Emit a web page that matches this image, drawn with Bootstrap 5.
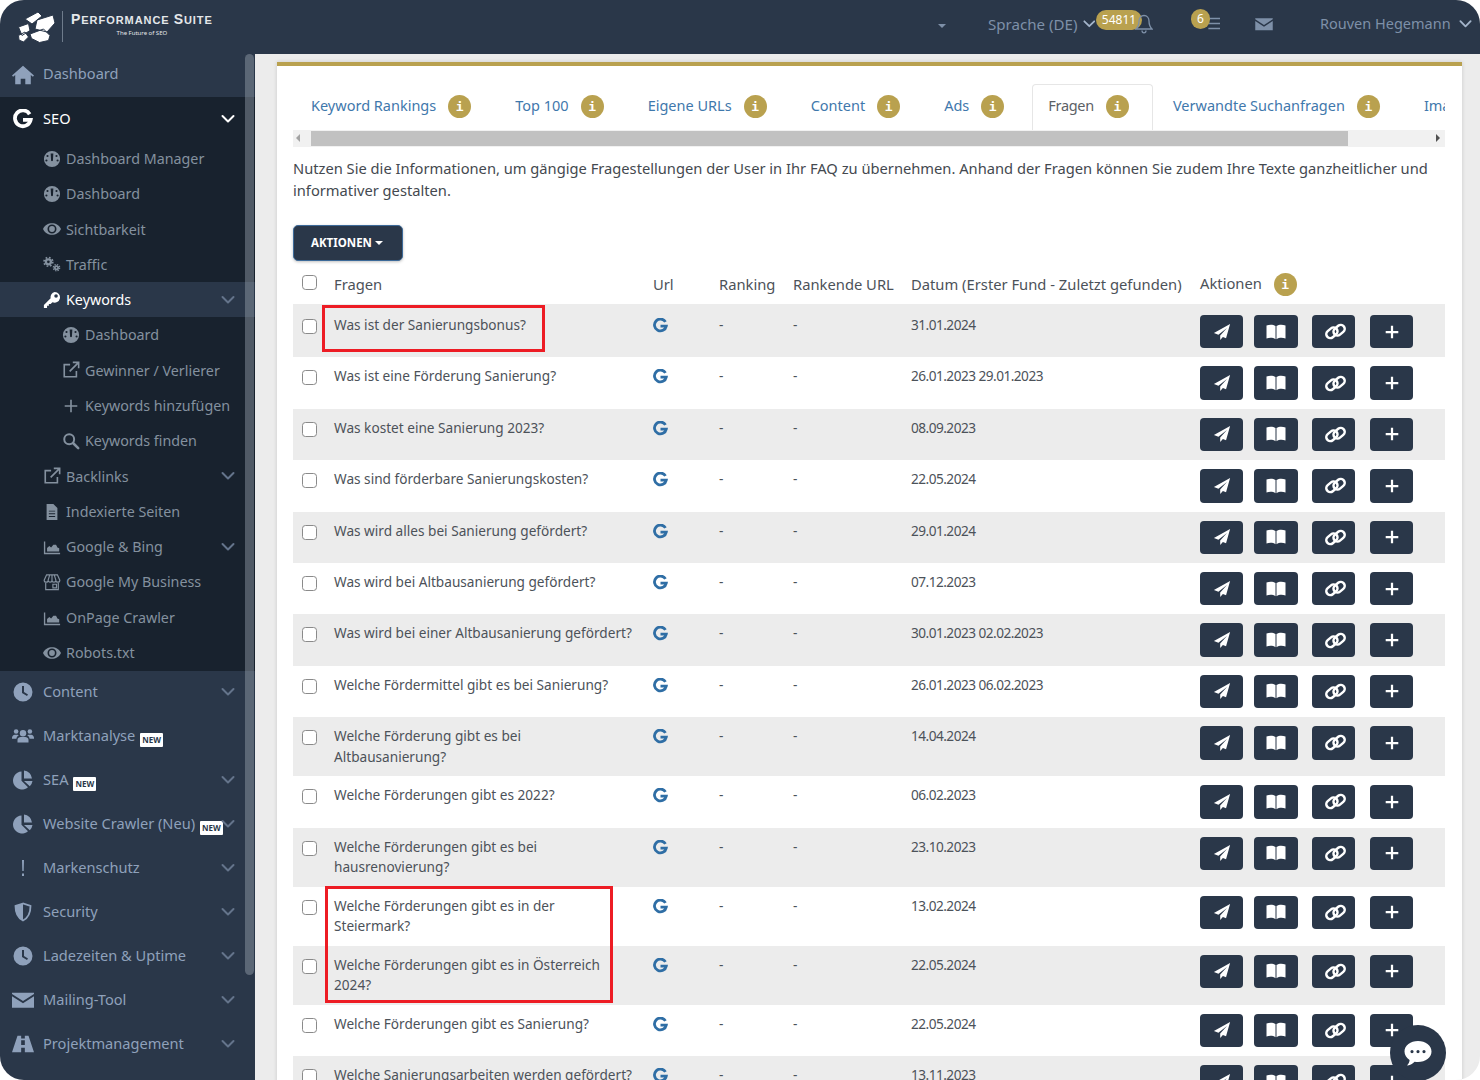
<!DOCTYPE html>
<html lang="de">
<head>
<meta charset="UTF-8">
<title>Performance Suite - Fragen</title>
<link href="https://cdn.jsdelivr.net/npm/bootstrap@5.3.3/dist/css/bootstrap.min.css" rel="stylesheet">
<style>
html, body { height: 1080px; overflow: hidden; background: #fff; }
body { font-family: "Noto Sans", "Liberation Sans", sans-serif; font-size: 14px; color: #4c5259; }
.app-shell { position: relative; height: 1080px; border-radius: 24px; overflow: hidden; background: #ececec; }
.top-bar { height: 54px; background: #2a3749; color: #7e90a8; padding-bottom: 6px; }
.brand-box { width: 255px; padding-left: 17px; flex: none; }
.brand-mark { width: 42px; height: 32px; color: #fff; margin-top: 6px; }
.brand-line { width: 1px; height: 31px; background: #6e7b8b; margin: 5px 8px 0 3px; }
.brand-name { color: #e4e7ea; font-family: "Liberation Sans", sans-serif; font-weight: 700; font-size: 11px; font-variant: small-caps; letter-spacing: .95px; line-height: 13px; padding-top: 1px; }
.brand-name b { font-size: 14px; }
.brand-sub { color: #e4e7ea; font-size: 6px; line-height: 8px; text-align: center; padding-top: 2px; }
.top-item { position: relative; font-size: 15.1px; white-space: nowrap; }
.top-caret { width: 0; height: 0; border: 4px solid transparent; border-top-color: #7e90a8; border-bottom: 0; margin-left: 683px; margin-top: 3px; }
.top-lang { margin-left: 42px; width: 108px; gap: 6px; }
.top-chev { color: #a3b4ca; }
.top-bell { width: 56px; height: 20px; }
.top-list { margin-left: 39px; width: 28px; height: 20px; }
.top-mail { margin-left: 36px; width: 18px; }
.top-user { margin-left: 47px; font-size: 14.5px; }
.gold-pill { position: absolute; background: #b9a14f; color: #fff; border-radius: 10px; font-size: 12px; line-height: 20px; height: 20px; text-align: center; }
.pill-count { width: 46px; left: 0; top: -4px; }
.pill-six { width: 19px; left: 0; top: -5px; }
.bell-ico { left: 39px; top: 0; }
.list-ico { left: 14px; top: 2px; }
.side-panel { position: relative; width: 255px; height: 1026px; background: #2a3749; overflow: hidden; flex: none; }
.side-thumb { position: absolute; left: 245px; top: 0; width: 9px; height: 921px; border-radius: 5px; background: rgba(160,170,180,.42); }
.side-row { height: 44px; display: flex; align-items: center; color: #8fa1bb; font-size: 14.6px; white-space: nowrap; position: relative; }
.side-row .side-ico { width: 22px; height: 20px; position: absolute; left: 12px; top: 50%; margin-top: -10px; }
.side-row .side-txt { position: absolute; left: 43px; }
.side-row .side-chev { position: absolute; left: 221px; top: 50%; margin-top: -5px; width: 14px; height: 10px; color: #64748b; }
.row-dash { height: 43px; padding-bottom: 2px; }
.row-dash .side-ico { margin-top: -11px; }
.row-dash .side-txt { top: 9px; }
.side-open { background: #18222e; height: 574px; margin-bottom: -1px; }
.row-seo { height: 43px; color: #fff; }
.row-seo.side-row .side-chev { color: #fff; }
.side-sub { padding-top: 1px; }
.side-sub .side-row { height: 35.3px; color: #84919f; font-size: 14.3px; }
.side-sub .side-ico { width: 18px; height: 18px; left: 43px; margin-top: -9px; }
.side-sub .side-txt { left: 66px; }
.side-sub .row-active { background: #2a3749; color: #fff; }
.side-sub .row-deep .side-ico { left: 62px; }
.side-sub .row-deep .side-txt { left: 85px; }
.new-tag { display: inline-block; background: #fff; color: #2a3749; font-size: 8px; font-weight: 700; line-height: 14px; padding: 0 2px; margin-left: 5px; vertical-align: -2px; border-radius: 1px; }
.main-area { flex: 1; padding: 8px 18px 0 22px; overflow: hidden; }
.content-box { background: #fff; border-top: 4px solid #b9a14f; padding: 18px 17px 0 16px; height: 1100px; box-shadow: 0 0 4px rgba(0,0,0,.15); }
.tab-strip { height: 46px; overflow: hidden; border: 0; flex-wrap: nowrap; padding-left: 2px; }
.tab-strip .nav-link { display: flex; align-items: center; gap: 12px; white-space: nowrap; color: #3f78ac; padding: 0 23px 3px 15px; height: 46px; margin-right: 4px; border-radius: 4px 4px 0 0; border: 1px solid transparent; border-bottom: 0; font-size: 14.5px; }
.tab-strip .nav-link.active { color: #5c6166; border-color: #e6e6e6; background: #fff; letter-spacing: -.3px; }
.info-dot { flex: none; display: inline-block; width: 23px; height: 23px; border-radius: 50%; background: #b9a14f; color: #fff; text-align: center; font-family: "DejaVu Sans Mono", monospace; font-weight: 700; font-size: 13px; line-height: 23px; letter-spacing: 0; }
.fake-scroll { height: 17px; background: #f1f1f1; display: flex; align-items: center; position: relative; }
.scroll-fill { position: absolute; left: 18px; top: 1px; bottom: 1px; width: 1037px; background: #c1c1c1; }
.arr-left, .arr-right { position: absolute; width: 0; height: 0; border: 4px solid transparent; top: 4px; }
.arr-left { left: 3px; border-right-color: #a3a3a3; border-left: 0; }
.arr-right { right: 5px; border-left-color: #505050; border-right: 0; }
.intro-text { font-size: 14.7px; line-height: 21.5px; margin: 11px 0 24px; color: #44494f; }
.btn-actions { background: #2a3749; color: #fff; font-size: 11.5px; font-weight: 700; padding: 0 19px 0 17px; height: 36px; line-height: 34px; border-radius: 5px; border: 1px solid #3d6a99; box-shadow: 0 1px 3px rgba(0,0,0,.25); }
.btn-actions:hover { background: #2a3749; color: #fff; }
.btn-caret { display: inline-block; width: 0; height: 0; border: 4px solid transparent; border-top-color: #fff; border-bottom: 0; vertical-align: 2px; }
.table-holder { position: relative; margin-top: 4px; }
.q-table { width: 1152px; table-layout: fixed; border-collapse: collapse; font-size: 13.63px; }
.q-table th { font-weight: 400; font-size: 14.75px; padding: 0 8px; height: 39px; color: #4c5259; white-space: nowrap; line-height: 21px; vertical-align: middle; }
.q-table td { padding: 9px 8px; line-height: 20.5px; vertical-align: top; }
.q-table tbody tr:first-child td { padding-top: 11px; }
.q-table td.date-cell { letter-spacing: -.52px; }
.g-mark { width: 15px; height: 15px; color: #2f6ea5; display: block; margin-top: 3px; }
.q-table tbody tr:nth-child(odd) td { background: #ececec; }
.q-check { width: 15px; height: 15px; margin: 4px 0 0 1px; border: 1px solid #8a8a8a; border-radius: 3px; }
.q-table th .q-check { margin-top: -5px; }
.act-wrap { display: flex; height: 33.4px; }
.act-btn { height: 33.4px; width: 43px; background: #2a3749; color: #fff; border-radius: 4px; display: flex; align-items: center; justify-content: center; margin-right: 11px; }
.act-btn:nth-child(2) { width: 44px; margin-right: 14px; }
.act-btn:nth-child(3) { margin-right: 15px; }
.act-btn svg { width: 18px; height: 18px; }
.act-btn .ico-book { width: 20px; height: 20px; }
.act-btn .ico-link { width: 21px; height: 21px; margin-left: 3px; }
.red-frame { position: absolute; border: 3px solid #ed1c24; pointer-events: none; }
.frame-one { left: 29px; top: 40px; width: 223px; height: 47px; }
.frame-two { left: 32px; top: 621px; width: 288px; height: 117px; }
.chat-bubble { position: absolute; left: 1390px; top: 1025px; width: 56px; height: 56px; border-radius: 50%; background: #2a3749; color: #fff; display: flex; align-items: center; justify-content: center; }
.chat-bubble svg { width: 28px; height: 26px; }
</style>
</head>
<body>
<svg width="0" height="0" class="d-block" aria-hidden="true">
  <symbol id="i-home" viewBox="0 0 24 20"><path fill="currentColor" d="M12 0 0 10.500l1.200 1.400L3.500 10v10h6v-6h5v6h6V10l2.300 1.900L24 10.500z"/></symbol>
  <symbol id="i-g" viewBox="0 0 24 24"><path fill="none" stroke="currentColor" stroke-width="4.500" d="M20 6.200A9.500 9.500 0 1 0 21.200 13H12"/></symbol>
  <symbol id="i-chev" viewBox="0 0 14 10"><path fill="none" stroke="currentColor" stroke-width="2" stroke-linecap="round" stroke-linejoin="round" d="M1.500 2 7 7.500 12.500 2"/></symbol>
  <symbol id="i-gauge" viewBox="0 0 20 20"><path fill="currentColor" fill-rule="evenodd" d="M10 1a9 9 0 1 1 0 18 9 9 0 0 1 0-18zM9 12a1.500 1.500 0 0 0 2 0l.5-8h-3zM5 5.500a1.200 1.200 0 1 0 0 2.400 1.200 1.200 0 0 0 0-2.400zM15 5.500a1.200 1.200 0 1 0 0 2.400 1.200 1.200 0 0 0 0-2.400zM3.800 10.500a1.200 1.200 0 1 0 0 2.400 1.200 1.200 0 0 0 0-2.400zM16.200 10.500a1.200 1.200 0 1 0 0 2.400 1.200 1.200 0 0 0 0-2.400z"/></symbol>
  <symbol id="i-eye" viewBox="0 0 20 20"><path fill="currentColor" fill-rule="evenodd" d="M0 10c3.500-8.500 16.500-8.500 20 0-3.500 8.500-16.500 8.500-20 0zm10-5a5 5 0 1 0 0 10 5 5 0 0 0 0-10zm0 1.800a3.200 3.200 0 1 1 0 6.400 3.200 3.200 0 0 1 0-6.400z"/></symbol>
  <symbol id="i-cogs" viewBox="0 0 20 20"><g fill="none" stroke="currentColor"><circle cx="6" cy="6.500" r="2.800" stroke-width="2.600"/><circle cx="6" cy="6.500" r="4.900" stroke-width="1.800" stroke-dasharray="1.900 1.950"/><circle cx="15" cy="13" r="1.800" stroke-width="2"/><circle cx="15" cy="13" r="3.500" stroke-width="1.500" stroke-dasharray="1.500 1.250"/></g></symbol>
  <symbol id="i-key" viewBox="0 0 20 20"><path fill="currentColor" fill-rule="evenodd" d="M13 1a6 6 0 1 1-2.500 11.500L8.500 14.500H6.500v2h-2v2.500H1v-3.500l7.500-7.500A6 6 0 0 1 13 1zm1.500 2.500a2 2 0 1 0 0 4 2 2 0 0 0 0-4z"/></symbol>
  <symbol id="i-ext" viewBox="0 0 20 20"><path fill="none" stroke="currentColor" stroke-width="1.800" d="M9 4H2.500v13.500H16V11M12 1.500h6.500V8M18.500 1.500 8.500 11.500"/></symbol>
  <symbol id="i-plus" viewBox="0 0 20 20"><path fill="none" stroke="currentColor" stroke-width="1.800" d="M10 3v14M3 10h14"/></symbol>
  <symbol id="i-plusb" viewBox="0 0 20 20"><path fill="none" stroke="currentColor" stroke-width="2.500" d="M10 3v14M3 10h14"/></symbol>
  <symbol id="i-search" viewBox="0 0 20 20"><circle cx="8" cy="8" r="5.500" fill="none" stroke="currentColor" stroke-width="2.200"/><path stroke="currentColor" stroke-width="2.800" stroke-linecap="round" d="m12.500 12.500 5.500 5.500"/></symbol>
  <symbol id="i-file" viewBox="0 0 20 20"><path fill="currentColor" fill-rule="evenodd" d="M4 1h7.500L16 5.500V19H4zM6.500 8.500v1h7v-1zm0 3v1h7v-1zm0 3v1h7v-1z"/></symbol>
  <symbol id="i-area" viewBox="0 0 20 20"><path fill="currentColor" d="M1 4h1.500v12.500H19V18H1zM4.500 15v-4l2.500-2 2 1.500 2.500-3h3l1.500 3 2 1V15z"/></symbol>
  <symbol id="i-store" viewBox="0 0 20 20"><path fill="none" stroke="currentColor" stroke-width="1.300" d="M4 2h12l2.700 6a2.200 2.200 0 0 1-4.400 0 2.150 2.150 0 0 1-4.300 0 2.150 2.150 0 0 1-4.300 0 2.200 2.200 0 0 1-4.400 0zM7.500 2 5.700 8M12.500 2l1.800 6M10 2v6M3 11v7.500h14V11M11 12.500h4v4h-4z"/></symbol>
  <symbol id="i-clock" viewBox="0 0 20 20"><path fill="currentColor" fill-rule="evenodd" d="M10 .5a9.500 9.500 0 1 1 0 19 9.500 9.500 0 0 1 0-19zM9 4v7l5 3 1-1.500-4-2.500V4z"/></symbol>
  <symbol id="i-users" viewBox="0 0 24 20"><g fill="currentColor"><circle cx="12" cy="7" r="3.500"/><circle cx="4.500" cy="5" r="2.500"/><circle cx="19.500" cy="5" r="2.500"/><path d="M6 17v-3c0-2 2-3 3.500-3h5c1.500 0 3.500 1 3.500 3v3zM0 12c0-2 1.500-3.500 3-3.500h3c.5 0 1 .3 1.400.600C5.800 10 5 11.500 4.800 13H0zM24 12c0-2-1.500-3.500-3-3.500h-3c-.5 0-1 .3-1.400.600 1.600.9 2.400 2.400 2.600 3.900H24z"/></g></symbol>
  <symbol id="i-pie" viewBox="0 0 20 20"><path fill="currentColor" d="M8.500 1.500v9.200l6.500 6.500A9 9 0 1 1 8.500 1.500zM11 .5a9 9 0 0 1 8 8h-8zM11 11h8.500a9 9 0 0 1-2.700 5.200z"/></symbol>
  <symbol id="i-excl" viewBox="0 0 20 20"><path fill="currentColor" d="M9 2h2l-.3 11H9.300zM9 15.500h2v2.500H9z"/></symbol>
  <symbol id="i-shield" viewBox="0 0 20 20"><path fill="none" stroke="currentColor" stroke-width="1.800" d="M10 1.500 2.500 4c0 7 1.500 11.500 7.500 14.500C16 15.500 17.500 11 17.500 4z"/><path fill="currentColor" d="M10 1.500 2.500 4c0 7 1.500 11.500 7.500 14.500z"/></symbol>
  <symbol id="i-mail" viewBox="0 0 20 16"><path fill="currentColor" d="M0 1.500h20v1L10 9 0 2.500zM0 4.500 10 11l10-6.500V15H0z"/></symbol>
  <symbol id="i-road" viewBox="0 0 24 20"><path fill="currentColor" fill-rule="evenodd" d="M6 1h4v3h4V1h4l6 18H14v-5h-4v5H0zM10 6v5h4V6z"/></symbol>
  <symbol id="i-plane" viewBox="0 0 20 20"><path fill="currentColor" d="M19 1 1 11l5 2L15.500 5.500 8 14v5l3-3.500 3.500 1.500z"/></symbol>
  <symbol id="i-book" viewBox="0 0 20 20"><path fill="currentColor" d="M.500 3.500C3.500 2.300 7 2.300 9.500 4v13.200C7 15.500 3.500 15.500.5 16.500zM19.500 3.500C16.500 2.300 13 2.300 10.500 4v13.200c2.500-1.700 6-1.700 9-.7z"/></symbol>
  <symbol id="i-link" viewBox="0 0 20 20"><g fill="none" stroke="currentColor" stroke-width="2.400"><rect x=".8" y="7.500" width="11.500" height="7.500" rx="3.700" transform="rotate(-40 6.500 11.200)"/><rect x="7.700" y="5" width="11.500" height="7.500" rx="3.700" transform="rotate(-40 13.500 8.800)"/></g></symbol>
  <symbol id="i-bell" viewBox="0 0 18 20"><path fill="none" stroke="currentColor" stroke-width="1.300" d="M9 1.500c3 0 5 2.500 5 5.500 0 4 1 6 3 8H1c2-2 3-4 3-8 0-3 2-5.500 5-5.500zM7 16.500c0 1.300 1 2.300 2 2.300s2-1 2-2.300"/></symbol>
  <symbol id="i-list" viewBox="0 0 18 16"><path fill="currentColor" d="M4 1h14v2H4zM4 7h14v2H4zM4 13h14v2H4z"/></symbol>
  <symbol id="i-chat" viewBox="0 0 28 26"><path fill="currentColor" fill-rule="evenodd" d="M14 1c7.500 0 13.500 4.600 13.500 10.500S21.500 22 14 22c-1.200 0-2.300-.1-3.400-.3C8.500 24 5.500 25.300 3 25.500c1.500-1.500 2.500-3.600 2.600-5.500C2.500 18 .5 15 .5 11.500.5 5.600 6.500 1 14 1zM8 10a1.600 1.600 0 1 0 0 3.200A1.600 1.600 0 0 0 8 10zm6 0a1.600 1.600 0 1 0 0 3.200 1.600 1.600 0 0 0 0-3.200zm6 0a1.600 1.600 0 1 0 0 3.200 1.600 1.600 0 0 0 0-3.200z"/></symbol>
  <symbol id="i-logo" viewBox="17 9 42 32"><g fill="currentColor" stroke="#2a3749" stroke-width="1"><path d="M25 17l13-7 4 4-10 8zM37 18l16-5 2 8-8 9-12-3zM18.500 25l10-3.500 1.500 7-8 5zM18.500 33.500l6.500-3.500 3.500 5-5 5-4.500-2zM30 32l13.500-5 6.500 6.500-1.500 5-9 2-8-4z"/></g></symbol>
</svg>

<div class="app-shell">
  <header class="top-bar d-flex align-items-center">
    <div class="brand-box d-flex align-items-center">
      <svg class="brand-mark"><use href="#i-logo"/></svg>
      <span class="brand-line"></span>
      <div>
        <div class="brand-name"><b>P</b>ERFORMANCE <b>S</b>UITE</div>
        <div class="brand-sub">The Future of SEO</div>
      </div>
    </div>
    <span class="top-caret"></span>
    <span class="top-item top-lang d-flex align-items-center">Sprache (DE) <svg class="top-chev" width="13" height="10"><use href="#i-chev"/></svg></span>
    <span class="top-item top-bell"><span class="gold-pill pill-count">54811</span><svg class="position-absolute bell-ico" width="18" height="20"><use href="#i-bell"/></svg></span>
    <span class="top-item top-list"><svg class="position-absolute list-ico" width="15" height="15"><use href="#i-list"/></svg><span class="gold-pill pill-six">6</span></span>
    <svg class="top-mail" height="14"><use href="#i-mail"/></svg>
    <span class="top-item top-user d-flex align-items-center gap-2">Rouven Hegemann <svg class="top-chev" width="13" height="10"><use href="#i-chev"/></svg></span>
  </header>

  <div class="d-flex">
    <aside class="side-panel" id="sidebar"></aside>
    <main class="main-area">
      <div class="content-box">
        <ul class="nav nav-tabs tab-strip" id="tabs"></ul>
        <div class="fake-scroll"><span class="arr-left"></span><span class="scroll-fill"></span><span class="arr-right"></span></div>
        <p class="intro-text">Nutzen Sie die Informationen, um gängige Fragestellungen der User in Ihr FAQ zu übernehmen. Anhand der Fragen können Sie zudem Ihre Texte ganzheitlicher und informativer gestalten.</p>
        <button type="button" class="btn btn-actions">AKTIONEN <span class="btn-caret"></span></button>
        <div class="table-holder">
          <table class="q-table">
            <colgroup><col style="width:33px"><col style="width:319px"><col style="width:66px"><col style="width:74px"><col style="width:118px"><col style="width:289px"><col style="width:253px"></colgroup>
            <thead>
              <tr>
                <th><input type="checkbox" class="q-check form-check-input d-block"></th>
                <th>Fragen</th><th>Url</th><th>Ranking</th><th>Rankende URL</th>
                <th>Datum (Erster Fund - Zuletzt gefunden)</th>
                <th>Aktionen <span class="info-dot ms-2">i</span></th>
              </tr>
            </thead>
            <tbody id="rows"></tbody>
          </table>
          <span class="red-frame frame-one"></span>
          <span class="red-frame frame-two"></span>
        </div>
      </div>
    </main>
  </div>
  <div class="chat-bubble"><svg><use href="#i-chat"/></svg></div>
</div>

<script>
const ico = (n, c) => `<svg class="${c || 'side-ico'}"><use href="#i-${n}"/></svg>`;
const chev = ico('chev', 'side-chev');
const tag = '<span class="new-tag">NEW</span>';
const row = (icon, text, opts = {}) => `<div class="side-row ${opts.cls || ''}">${ico(icon)}<span class="side-txt">${text}</span>${opts.chev ? chev : ''}</div>`;

document.getElementById('sidebar').innerHTML = `
  ${row('home', 'Dashboard', {cls: 'row-dash'})}
  <div class="side-open">
    ${row('g', 'SEO', {cls: 'row-seo', chev: 1})}
    <div class="side-sub">
      ${row('gauge', 'Dashboard Manager')}
      ${row('gauge', 'Dashboard')}
      ${row('eye', 'Sichtbarkeit')}
      ${row('cogs', 'Traffic')}
      ${row('key', 'Keywords', {cls: 'row-active', chev: 1})}
      ${row('gauge', 'Dashboard', {cls: 'row-deep'})}
      ${row('ext', 'Gewinner / Verlierer', {cls: 'row-deep'})}
      ${row('plus', 'Keywords hinzufügen', {cls: 'row-deep'})}
      ${row('search', 'Keywords finden', {cls: 'row-deep'})}
      ${row('ext', 'Backlinks', {chev: 1})}
      ${row('file', 'Indexierte Seiten')}
      ${row('area', 'Google &amp; Bing', {chev: 1})}
      ${row('store', 'Google My Business')}
      ${row('area', 'OnPage Crawler')}
      ${row('eye', 'Robots.txt')}
    </div>
  </div>
  ${row('clock', 'Content', {chev: 1})}
  ${row('users', 'Marktanalyse' + tag)}
  ${row('pie', 'SEA' + tag, {chev: 1})}
  ${row('pie', 'Website Crawler (Neu)' + tag, {chev: 1})}
  ${row('excl', 'Markenschutz', {chev: 1})}
  ${row('shield', 'Security', {chev: 1})}
  ${row('clock', 'Ladezeiten &amp; Uptime', {chev: 1})}
  ${row('mail', 'Mailing-Tool', {chev: 1})}
  ${row('road', 'Projektmanagement', {chev: 1})}
  <div class="side-thumb"></div>`;

const tabs = ['Keyword Rankings', 'Top 100', 'Eigene URLs', 'Content', 'Ads', 'Fragen', 'Verwandte Suchanfragen', 'Images'];
document.getElementById('tabs').innerHTML = tabs.map(t =>
  `<li class="nav-item"><a class="nav-link ${t === 'Fragen' ? 'active' : ''}" href="#">${t} <span class="info-dot">i</span></a></li>`).join('');

const data = [
  ['Was ist der Sanierungsbonus?', '31.01.2024'],
  ['Was ist eine Förderung Sanierung?', '26.01.2023 29.01.2023'],
  ['Was kostet eine Sanierung 2023?', '08.09.2023'],
  ['Was sind förderbare Sanierungskosten?', '22.05.2024'],
  ['Was wird alles bei Sanierung gefördert?', '29.01.2024'],
  ['Was wird bei Altbausanierung gefördert?', '07.12.2023'],
  ['Was wird bei einer Altbausanierung gefördert?', '30.01.2023 02.02.2023'],
  ['Welche Fördermittel gibt es bei Sanierung?', '26.01.2023 06.02.2023'],
  ['Welche Förderung gibt es bei<br>Altbausanierung?', '14.04.2024'],
  ['Welche Förderungen gibt es 2022?', '06.02.2023'],
  ['Welche Förderungen gibt es bei<br>hausrenovierung?', '23.10.2023'],
  ['Welche Förderungen gibt es in der<br>Steiermark?', '13.02.2024'],
  ['Welche Förderungen gibt es in Österreich<br>2024?', '22.05.2024'],
  ['Welche Förderungen gibt es Sanierung?', '22.05.2024'],
  ['Welche Sanierungsarbeiten werden gefördert?', '13.11.2023']
];
document.getElementById('rows').innerHTML = data.map(d => `
  <tr>
    <td><input type="checkbox" class="q-check form-check-input d-block"></td>
    <td>${d[0]}</td>
    <td><svg class="g-mark"><use href="#i-g"/></svg></td>
    <td>-</td><td>-</td>
    <td class="date-cell">${d[1]}</td>
    <td><div class="act-wrap">
      <a class="act-btn" href="#"><svg><use href="#i-plane"/></svg></a>
      <a class="act-btn" href="#"><svg class="ico-book"><use href="#i-book"/></svg></a>
      <a class="act-btn" href="#"><svg class="ico-link"><use href="#i-link"/></svg></a>
      <a class="act-btn" href="#"><svg><use href="#i-plusb"/></svg></a>
    </div></td>
  </tr>`).join('');
</script>
<script src="https://cdn.jsdelivr.net/npm/bootstrap@5.3.3/dist/js/bootstrap.bundle.min.js"></script>
</body>
</html>
